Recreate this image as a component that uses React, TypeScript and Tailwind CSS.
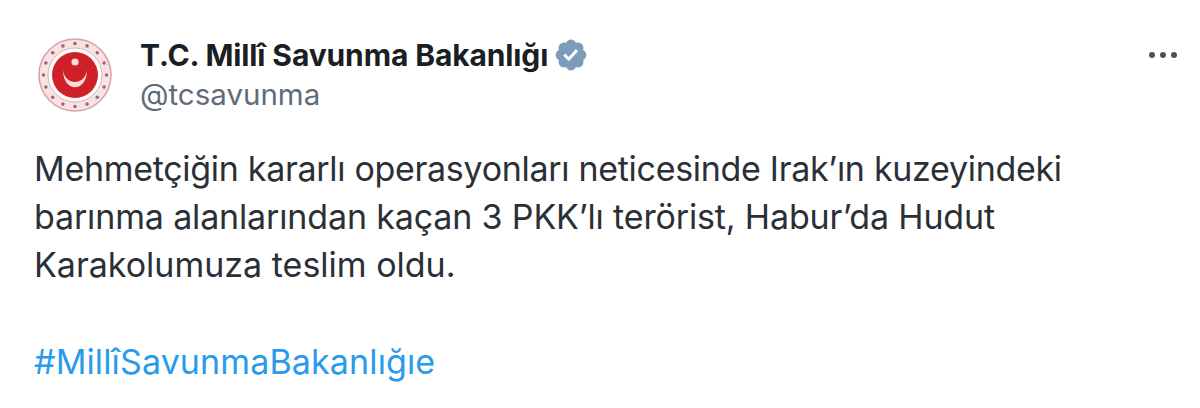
const Seal = () => {
  const dots = Array.from({ length: 16 }, (_, i) => (i * Math.PI * 2) / 16);
  return (
    <svg width="76" height="76" viewBox="0 0 76 76" className="blur-[0.6px]">
      <circle cx="38" cy="38" r="36" fill="#f7e3e4" stroke="#d9a0a6" strokeWidth="1.5" />
      <circle cx="38" cy="38" r="27" fill="#fff" stroke="#e3b0b4" strokeWidth="1" />
      {dots.map((a) => (
        <circle key={a} cx={38 + 31.5 * Math.cos(a)} cy={38 + 31.5 * Math.sin(a)} r="1.8" fill="#a8636e" />
      ))}
      <circle cx="38" cy="38" r="23" fill="#cf2029" />
      <path d="M26 33 C26 56 50 56 50 33 C48 49 28 49 26 33 Z" fill="#f6dcd6" />
      <circle cx="38" cy="25" r="3.6" fill="#f6dcd6" />
    </svg>
  );
};

const Verified = () => (
  <svg width="36" height="36" viewBox="0 0 22 22">
    <path
      fill="#7c9cbb"
      d="M20.396 11c-.018-.646-.215-1.275-.57-1.816-.354-.54-.852-.972-1.438-1.246.223-.607.27-1.264.14-1.897-.131-.634-.437-1.218-.882-1.687-.47-.445-1.053-.75-1.687-.882-.633-.13-1.29-.083-1.897.14-.273-.587-.704-1.086-1.245-1.44S11.647 1.62 11 1.604c-.646.017-1.273.213-1.813.568s-.969.854-1.24 1.44c-.608-.223-1.267-.272-1.902-.14-.635.13-1.22.436-1.69.882-.445.47-.749 1.055-.878 1.688-.13.633-.08 1.29.144 1.896-.587.274-1.087.705-1.443 1.245-.356.54-.555 1.17-.574 1.817.02.647.218 1.276.574 1.817.356.54.856.972 1.443 1.245-.224.606-.274 1.263-.144 1.896.13.634.433 1.218.877 1.688.47.443 1.054.747 1.687.878.633.132 1.29.084 1.897-.136.274.586.705 1.084 1.246 1.439.54.354 1.17.551 1.816.569.647-.016 1.276-.213 1.817-.567s.972-.854 1.245-1.44c.604.239 1.266.296 1.903.164.636-.132 1.22-.447 1.68-.907.46-.46.776-1.044.908-1.681s.075-1.299-.165-1.903c.586-.274 1.084-.705 1.439-1.246.354-.54.551-1.17.569-1.816z"
    />
    <path fill="#fff" d="M9.662 14.85l-3.429-3.428 1.293-1.302 2.072 2.072 4.4-4.794 1.347 1.246z" />
  </svg>
);

export default function App() {
  return (
    <div className="w-[1200px] h-[408px] overflow-hidden bg-white font-['Inter','Liberation_Sans',sans-serif] text-[#0f1419]">
      <div className="flex items-start pl-[37px] pr-[20px] pt-[37px]">
        <Seal />
        <div className="ml-[27px] flex-1 min-w-0">
          <div className="flex items-center h-[36px]">
            <span className="text-[30px] font-bold tracking-[-0.12px] leading-none text-[#1a1f24]">T.C. Millî Savunma Bakanlığı</span>
            <span className="ml-[5px]"><Verified /></span>
          </div>
          <div className="text-[29.5px] leading-none mt-[7px] text-[#5f6c78]">@tcsavunma</div>
        </div>
        <div className="flex gap-[5px] mt-[15px] mr-[3px]">
          <span className="w-[6px] h-[6px] rounded-full bg-[#4a545e]" />
          <span className="w-[6px] h-[6px] rounded-full bg-[#4a545e]" />
          <span className="w-[6px] h-[6px] rounded-full bg-[#4a545e]" />
        </div>
      </div>
      <div className="pl-[34px] mt-[32px] text-[34px] leading-[48px] text-[#2a3036]">
        <p className="tracking-[-0.3px]">Mehmetçiğin kararlı operasyonları neticesinde Irak’ın kuzeyindeki</p>
        <p className="tracking-[-0.15px]">barınma alanlarından kaçan 3 PKK’lı terörist, Habur’da Hudut</p>
        <p>Karakolumuza teslim oldu.</p>
        <p className="mt-[49px] tracking-[0.13px] text-[#2a9bea]">#MillîSavunmaBakanlığıe</p>
      </div>
    </div>
  );
}
